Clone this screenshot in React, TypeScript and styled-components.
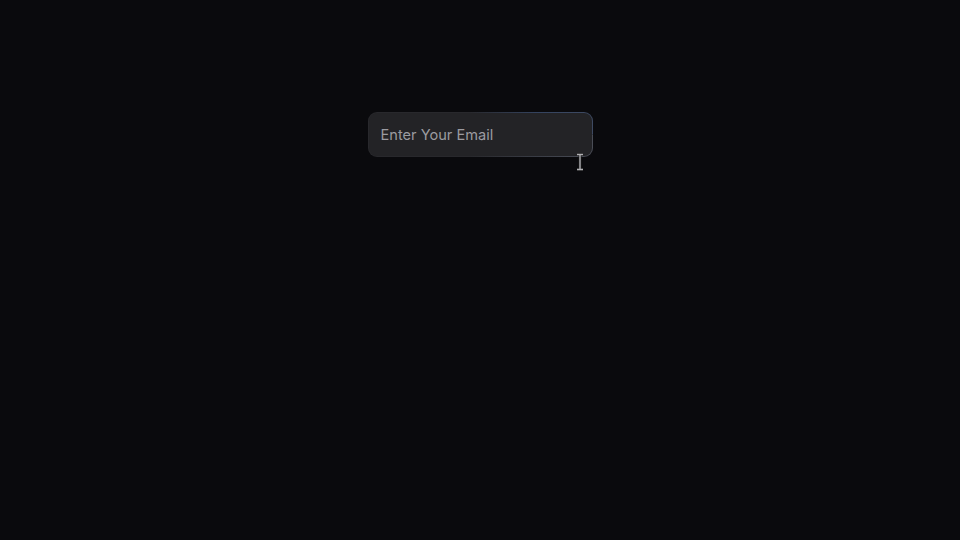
import * as React from "react";
import styled, { createGlobalStyle } from "styled-components";

const GlobalStyle = createGlobalStyle`
  html, body {
    margin: 0;
    padding: 0;
    background: #0a0a0d;
  }
  * {
    box-sizing: border-box;
  }
`;

const Page = styled.div`
  min-height: 540px;
  display: flex;
  flex-direction: column;
  align-items: center;
  padding-top: 112px;
  background: #0a0a0d;
`;

const Frame = styled.div`
  position: relative;
  width: 225px;
  height: 45px;
  padding: 1px;
  border-radius: 9px;
  background:
    linear-gradient(90deg, transparent 45%, #34435f 75%, #3e4a62 100%) top / 100% 50% no-repeat,
    linear-gradient(90deg, transparent 45%, #3a3d46 75%, #4a4d56 100%) bottom / 100% 50% no-repeat,
    #28282c;
`;

const Input = styled.input`
  width: 100%;
  height: 100%;
  border: none;
  outline: none;
  border-radius: 8px;
  background: #232326;
  padding: 0 12px;
  font-family: Inter, "Noto Sans", sans-serif;
  font-size: 14.6px;
  color: #e4e4e7;

  &::placeholder {
    color: #9b9ba0;
  }
`;

const Cursor = styled.div`
  position: absolute;
  left: 207px;
  top: 41px;
  pointer-events: none;
`;

const App: React.FunctionComponent = () => {
  return (
    <>
      <GlobalStyle />
      <Page>
        <Frame>
          <Input type="email" placeholder="Enter Your Email" />
          <Cursor>
            <svg width="10" height="18" viewBox="0 0 10 18">
              <path
                d="M2 1.5h6M5 1.5v15M2 16.5h6"
                stroke="#1a1a1a"
                strokeWidth="3"
                fill="none"
              />
              <path
                d="M2 1.5h6M5 1.5v15M2 16.5h6"
                stroke="#b0b0b4"
                strokeWidth="1.4"
                fill="none"
              />
            </svg>
          </Cursor>
        </Frame>
      </Page>
    </>
  );
};

export default App;
